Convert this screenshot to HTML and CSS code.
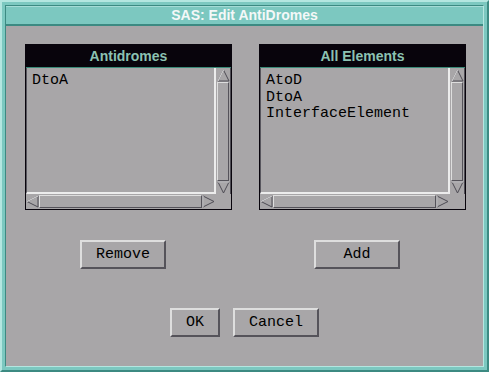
FILE: index.html
```html
<!DOCTYPE html>
<html lang="en">
<head>
    <meta charset="UTF-8">
    <title>SAS: Edit AntiDromes</title>
    <link rel="stylesheet" href="styles.css">
</head>
<body>
    <!-- dialog window -->
    <div class="window">
        <div class="frame">
            <div class="titlebar">SAS: Edit AntiDromes</div>

            <div class="content">
                <!-- two lists side by side -->
                <div class="lists">
                    <div class="listbox">
                        <div class="list-head">Antidromes</div>
                        <div class="list-main">
                            <div class="list-area">
                                <div class="item">DtoA</div>
                            </div>
                            <div class="vscroll">
                                <svg class="arrow" width="13" height="13" viewBox="0 0 13 13"><polygon points="6.5,1 12,12 1,12" fill="#a8a6a8" stroke="#4e4c54"/><line x1="1" y1="12" x2="6.5" y2="1" stroke="#e4e4e4"/></svg>
                                <div class="thumb"></div>
                                <svg class="arrow" width="13" height="13" viewBox="0 0 13 13"><polygon points="1,1 12,1 6.5,12" fill="#a8a6a8" stroke="#4e4c54"/><line x1="1" y1="1" x2="12" y2="1" stroke="#e4e4e4"/></svg>
                            </div>
                            <div class="hscroll">
                                <svg class="arrow" width="13" height="13" viewBox="0 0 13 13"><polygon points="1,6.5 12,1 12,12" fill="#a8a6a8" stroke="#4e4c54"/><line x1="1" y1="6.5" x2="12" y2="1" stroke="#e4e4e4"/></svg>
                                <div class="thumb"></div>
                                <svg class="arrow" width="13" height="13" viewBox="0 0 13 13"><polygon points="1,1 12,6.5 1,12" fill="#a8a6a8" stroke="#4e4c54"/><line x1="1" y1="1" x2="1" y2="12" stroke="#e4e4e4"/></svg>
                            </div>
                            <div class="corner"></div>
                        </div>
                    </div>

                    <div class="listbox">
                        <div class="list-head">All Elements</div>
                        <div class="list-main">
                            <div class="list-area">
                                <div class="item">AtoD</div>
                                <div class="item">DtoA</div>
                                <div class="item">InterfaceElement</div>
                            </div>
                            <div class="vscroll">
                                <svg class="arrow" width="13" height="13" viewBox="0 0 13 13"><polygon points="6.5,1 12,12 1,12" fill="#a8a6a8" stroke="#4e4c54"/><line x1="1" y1="12" x2="6.5" y2="1" stroke="#e4e4e4"/></svg>
                                <div class="thumb"></div>
                                <svg class="arrow" width="13" height="13" viewBox="0 0 13 13"><polygon points="1,1 12,1 6.5,12" fill="#a8a6a8" stroke="#4e4c54"/><line x1="1" y1="1" x2="12" y2="1" stroke="#e4e4e4"/></svg>
                            </div>
                            <div class="hscroll">
                                <svg class="arrow" width="13" height="13" viewBox="0 0 13 13"><polygon points="1,6.5 12,1 12,12" fill="#a8a6a8" stroke="#4e4c54"/><line x1="1" y1="6.5" x2="12" y2="1" stroke="#e4e4e4"/></svg>
                                <div class="thumb"></div>
                                <svg class="arrow" width="13" height="13" viewBox="0 0 13 13"><polygon points="1,1 12,6.5 1,12" fill="#a8a6a8" stroke="#4e4c54"/><line x1="1" y1="1" x2="1" y2="12" stroke="#e4e4e4"/></svg>
                            </div>
                            <div class="corner"></div>
                        </div>
                    </div>
                </div>

                <!-- remove / add -->
                <div class="list-actions">
                    <div class="action-cell"><button class="btn">Remove</button></div>
                    <div class="action-cell"><button class="btn">Add</button></div>
                </div>

                <!-- dialog buttons -->
                <div class="dialog-buttons">
                    <button class="btn btn-ok">OK</button>
                    <button class="btn">Cancel</button>
                </div>
            </div>
        </div>
    </div>
</body>
</html>
```

FILE: styles.css
```css
/* reset */
* {
    box-sizing: border-box;
    margin: 0;
    padding: 0;
}
body {
    background-color: #a8a6a8;
    font-family: 'Liberation Mono', monospace;
}
/* window frame */
.window {
    width: 489px;
    height: 372px;
    background-color: #7cc8c0;
    border-top: 2px solid #b4e6e0;
    border-left: 2px solid #b4e6e0;
    border-right: 2px solid #3c8a82;
    border-bottom: 2px solid #3c8a82;
    padding: 3px;
    display: flex;
}
.frame {
    flex: 1;
    display: flex;
    flex-direction: column;
    border-top: 1px solid #3c8a82;
    border-left: 1px solid #3c8a82;
    border-right: 1px solid #b4e6e0;
    border-bottom: 1px solid #b4e6e0;
}
.titlebar {
    height: 20px;
    background-color: #7cc8c0;
    border-top: 1px solid #a4dcd6;
    border-bottom: 2px solid #3c8a82;
    color: #f4f8f8;
    font-family: 'Liberation Sans', sans-serif;
    font-weight: 700;
    font-size: 14px;
    line-height: 16px;
    text-align: center;
}
/* dialog body */
.content {
    flex: 1;
    background-color: #a8a6a8;
    padding: 18px 0 0 19px;
}
.lists {
    display: grid;
    grid-template-columns: 207px 207px;
    column-gap: 27px;
}
.listbox {
    height: 166px;
    border: 1px solid #08040c;
    display: flex;
    flex-direction: column;
}
.list-head {
    height: 23px;
    background-color: #08040c;
    border-bottom: 1px solid #3a8a78;
    color: #8cc2b2;
    font-family: 'Liberation Sans', sans-serif;
    font-weight: 700;
    font-size: 14px;
    line-height: 22px;
    text-align: center;
}
.list-main {
    flex: 1;
    display: grid;
    grid-template-columns: 1fr 15px;
    grid-template-rows: 1fr 15px;
}
.list-area {
    border-left: 1px solid #58565e;
    border-right: 2px solid #ececec;
    border-bottom: 2px solid #ececec;
    padding: 5px 0 0 5px;
}
.item {
    font-size: 15px;
    line-height: 16.6px;
    color: #000;
}
/* scrollbars */
.vscroll {
    display: flex;
    flex-direction: column;
    padding: 1px 1px 0 1px;
    border-right: 1px solid #4e4c54;
}
.hscroll {
    display: flex;
    padding: 1px 1px 1px 0;
}
.arrow {
    display: block;
    flex: none;
}
.thumb {
    flex: 1;
    background-color: #a8a6a8;
    border-top: 1px solid #dedede;
    border-left: 1px solid #dedede;
    border-right: 1px solid #55535a;
    border-bottom: 1px solid #55535a;
}
.corner {
    background-color: #a8a6a8;
}
/* buttons */
.btn {
    height: 29px;
    width: 86px;
    background-color: #a8a6a8;
    border-top: 2px solid #dedede;
    border-left: 2px solid #dedede;
    border-right: 2px solid #55535a;
    border-bottom: 2px solid #55535a;
    font-family: 'Liberation Mono', monospace;
    font-size: 15px;
    color: #000;
}
.btn-ok {
    width: 50px;
}
.list-actions {
    display: grid;
    grid-template-columns: 207px 207px;
    column-gap: 27px;
    margin-top: 30px;
}
.action-cell {
    padding-left: 55px;
}
.dialog-buttons {
    display: flex;
    justify-content: center;
    gap: 13px;
    margin-top: 39px;
    margin-left: -19px;
}
```
